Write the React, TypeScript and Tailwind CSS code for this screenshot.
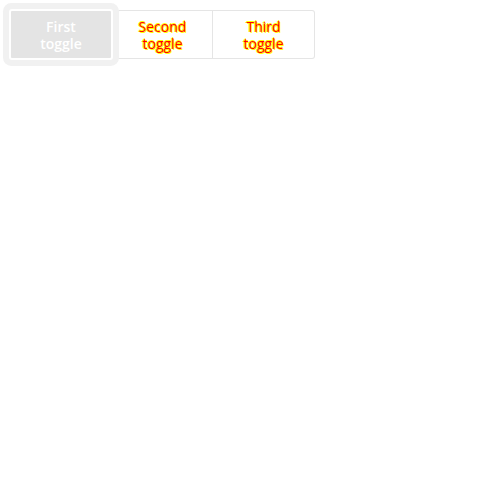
const TOGGLES = [
  { label: 'First toggle', active: true },
  { label: 'Second toggle', active: false },
  { label: 'Third toggle', active: false },
];

export default function App() {
  return (
    <div className="min-h-[500px] bg-white p-[9px] font-['Open_Sans',sans-serif]">
      <div className="inline-flex h-[51px] items-stretch">
        {TOGGLES.map((t, i) =>
          t.active ? (
            <button
              key={i}
              className="relative z-10 w-[104px] rounded-[3px] border-2 border-white bg-[#e4e4e4] px-6 text-[14px] leading-[17px] font-semibold text-white shadow-[0_0_0_6px_#f1f1f1]"
            >
              {t.label}
            </button>
          ) : (
            <button
              key={i}
              className={`my-px border border-l-0 border-[#e5e5e5] bg-white px-5 text-[14px] leading-[17px] text-[red] [text-shadow:-1px_0_0_yellow,0_-1px_0_yellow,1px_1px_0_yellow] ${
                i === TOGGLES.length - 1 ? 'w-[102px] rounded-r-[3px]' : 'w-[100px]'
              }`}
            >
              {t.label}
            </button>
          )
        )}
      </div>
    </div>
  );
}
